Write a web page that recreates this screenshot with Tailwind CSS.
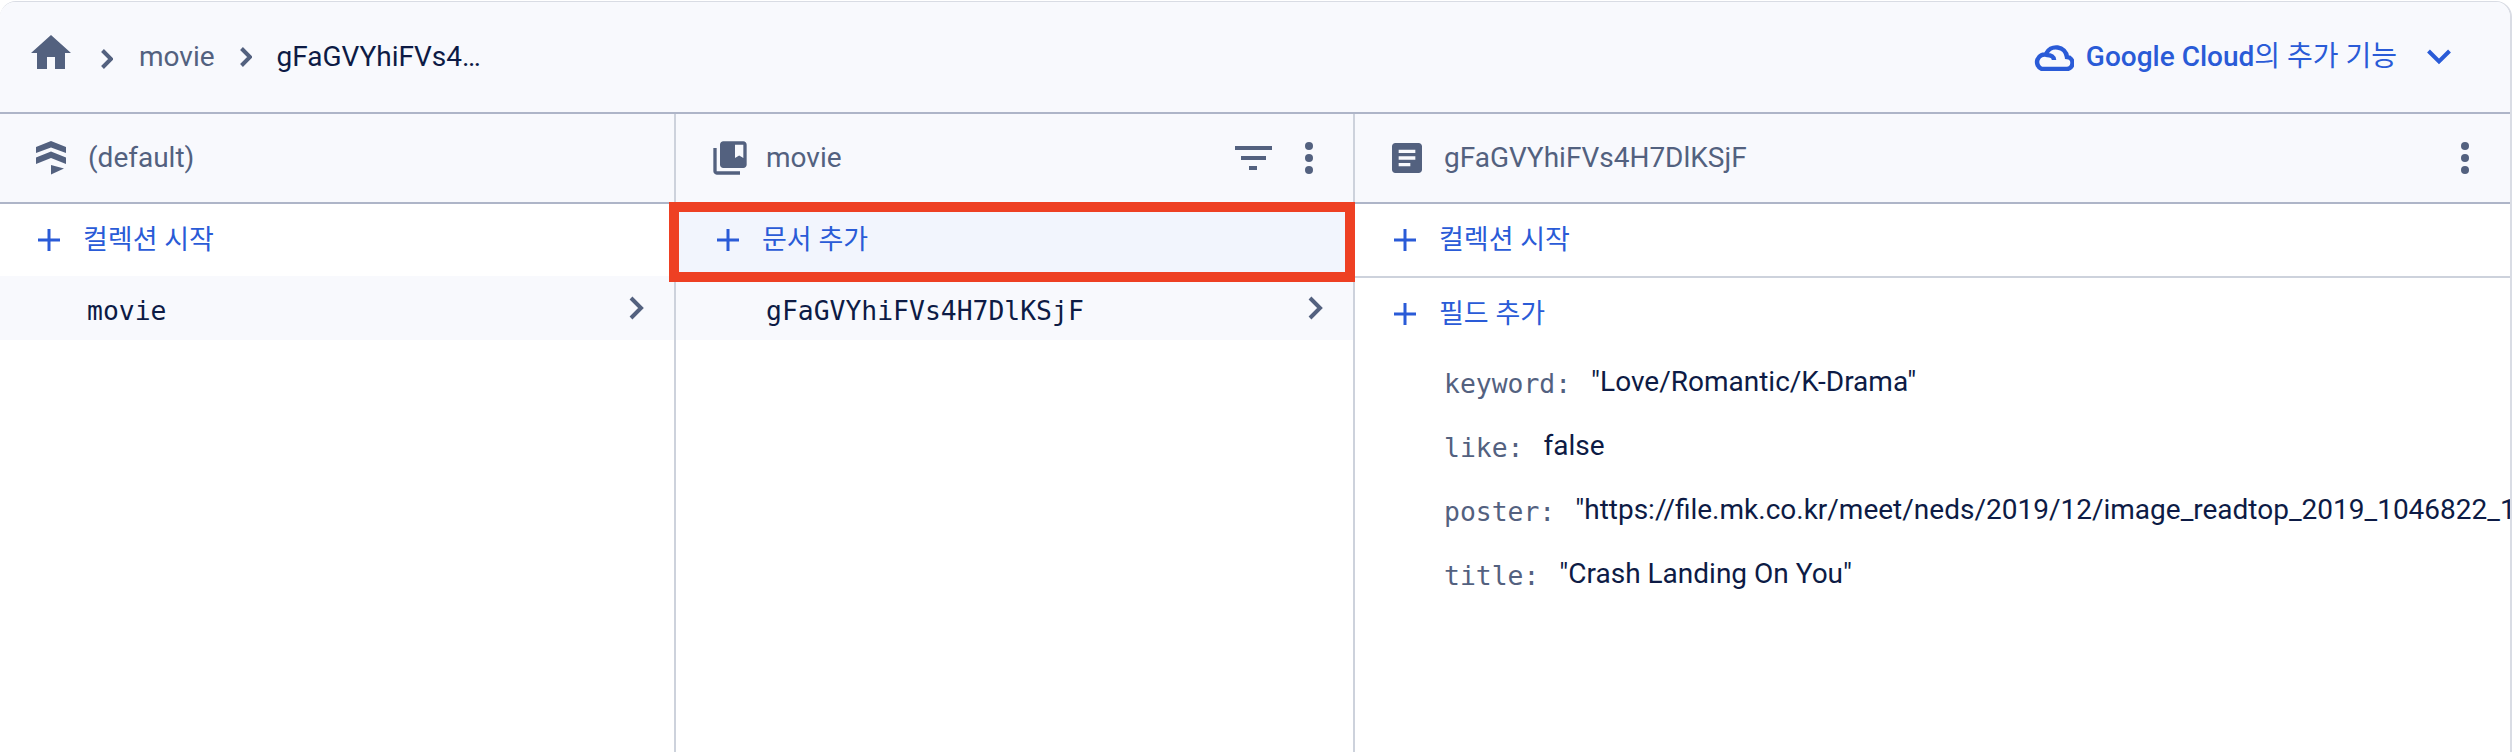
<!DOCTYPE html>
<html lang="ko">
  <head>
    <meta charset="UTF-8" />
    <title>Firestore</title>
    <script src="https://cdn.jsdelivr.net/npm/@tailwindcss/browser@4"></script>
  </head>
  <body class="bg-white font-['Roboto','Noto_Sans_CJK_KR',sans-serif]">
    <div class="relative w-[2520px] h-[752px] overflow-hidden bg-white">
      <div class="w-[2512px] h-[752px] mt-[1px] flex flex-col rounded-t-[16px] border-t border-r-2 border-[#d9dce4] overflow-hidden">
        <!-- Breadcrumb header -->
        <div class="h-[112px] shrink-0 flex items-center bg-[#f8f9fd] border-b-2 border-[#aeb5c8]">
          <svg class="ml-[27px] mb-[8px] w-[48px] h-[48px] fill-[#53617f]" viewBox="0 0 24 24"><path d="M10 20v-6h4v6h5v-8h3L12 3 2 12h3v8z" /></svg>
          <svg class="ml-[26px] mt-[4px] w-[12px] h-[20px] fill-none stroke-[#53617f] stroke-[4]" viewBox="0 0 12 20"><path d="M1.500 1.500 10 10l-8.500 8.500" /></svg>
          <span class="ml-[26px] text-[28px] text-[#53617f]">movie</span>
          <svg class="ml-[25px] w-[12px] h-[20px] fill-none stroke-[#53617f] stroke-[4]" viewBox="0 0 12 20"><path d="M1.500 1.500 10 10l-8.500 8.500" /></svg>
          <span class="ml-[25px] text-[28px] text-[#0d1b45]">gFaGVYhiFVs4…</span>
          <div class="ml-auto flex items-center pr-[59px]">
            <svg class="w-[41px] h-[28px] fill-none stroke-[#2a5bd7] stroke-[4.500]" viewBox="0 0 41 28"><path d="M21 17c0-3-3-5-7-5a7 7 0 0 0-5 14h24a6 6 0 0 0 1-12A11 11 0 0 0 13 11" /></svg>
            <span class="ml-[12px] text-[28px] font-medium text-[#2a5bd7]">Google Cloud<span class="font-normal">의 추가 기능</span></span>
            <svg class="ml-[30px] w-[24px] h-[16px] fill-none stroke-[#2a5bd7] stroke-[4]" viewBox="0 0 24 16"><path d="M1.500 2 12 12.500 22.500 2" /></svg>
          </div>
        </div>

        <div class="flex-1 flex min-h-0">
          <!-- Database column -->
          <div class="w-[676px] shrink-0 border-r-2 border-[#cdd2dc]">
            <div class="h-[90px] flex items-center bg-[#f8f9fd] border-b-2 border-[#aeb5c8] pl-[36px]">
              <svg class="w-[30px] h-[34px] fill-[#53617f]" viewBox="0 0 30 34"><path d="M15 0 30 6v6L15 6.500 0 12V6z" /><path d="M15 10.500l15 6v6.500L15 17 0 23v-6.500z" /><path d="M15 24l13 3.500L15 33.500z" /></svg>
              <span class="ml-[22px] text-[28px] text-[#53617f]">(default)</span>
            </div>
            <div class="h-[72px] flex items-center pl-[38px] text-[#2a5bd7]">
              <svg class="w-[22px] h-[22px] fill-[#2a5bd7]" viewBox="0 0 22 22"><path d="M9.500 0h3v9.500H22v3h-9.500V22h-3v-9.500H0v-3h9.500z" /></svg>
              <span class="ml-[23px] text-[27px]">컬렉션 시작</span>
            </div>
            <div class="h-[64px] flex items-center bg-[#f8f9fd] pl-[87px] pr-[30px]">
              <span class="pt-[6px] font-['DejaVu_Sans_Mono',monospace] text-[26.400px] text-[#0d1b45]">movie</span>
              <svg class="ml-auto w-[15px] h-[24px] fill-none stroke-[#53617f] stroke-[4]" viewBox="0 0 15 24"><path d="M2 2l10 10L2 22" /></svg>
            </div>
          </div>

          <!-- Collection column -->
          <div class="w-[679px] shrink-0 border-r-2 border-[#cdd2dc]">
            <div class="h-[90px] flex items-center bg-[#f8f9fd] border-b-2 border-[#aeb5c8] pl-[34px]">
              <svg class="w-[40px] h-[40px] fill-[#53617f]" viewBox="0 0 24 24"><path d="M4 6H2v14c0 1.100.9 2 2 2h14v-2H4V6zm16-4H8c-1.100 0-2 .9-2 2v12c0 1.100.9 2 2 2h12c1.100 0 2-.9 2-2V4c0-1.100-.9-2-2-2zm0 10l-2.500-1.500L15 12V4h5v8z" /></svg>
              <span class="ml-[16px] text-[28px] text-[#53617f]">movie</span>
              <svg class="ml-auto w-[37px] h-[24px] fill-[#53617f]" viewBox="0 0 37 24"><path d="M0 0h37v4H0zM6 10h25v4H6zM14 20h8v4h-8z" /></svg>
              <svg class="ml-[33px] mr-[40px] w-[8px] h-[32px] fill-[#53617f]" viewBox="0 0 8 32"><circle cx="4" cy="4" r="4" /><circle cx="4" cy="16" r="4" /><circle cx="4" cy="28" r="4" /></svg>
            </div>
            <div class="h-[72px] flex items-center pl-[41px] bg-[#f2f5fd]">
              <svg class="w-[22px] h-[22px] fill-[#2a5bd7]" viewBox="0 0 22 22"><path d="M9.500 0h3v9.500H22v3h-9.500V22h-3v-9.500H0v-3h9.500z" /></svg>
              <span class="ml-[23px] text-[27px] text-[#2a5bd7]">문서 추가</span>
            </div>
            <div class="h-[64px] flex items-center bg-[#f8f9fd] pl-[90px] pr-[30px]">
              <span class="pt-[6px] font-['DejaVu_Sans_Mono',monospace] text-[26.400px] text-[#0d1b45]">gFaGVYhiFVs4H7DlKSjF</span>
              <svg class="ml-auto w-[15px] h-[24px] fill-none stroke-[#53617f] stroke-[4]" viewBox="0 0 15 24"><path d="M2 2l10 10L2 22" /></svg>
            </div>
          </div>

          <!-- Document column -->
          <div class="flex-1 min-w-0">
            <div class="h-[90px] flex items-center bg-[#f8f9fd] border-b-2 border-[#aeb5c8] pl-[32px]">
              <svg class="w-[40px] h-[40px] fill-[#53617f]" viewBox="0 0 24 24"><path d="M19 3H5c-1.100 0-2 .9-2 2v14c0 1.100.9 2 2 2h14c1.100 0 2-.9 2-2V5c0-1.100-.9-2-2-2zm-5 14H7v-2h7v2zm3-4H7v-2h10v2zm0-4H7V7h10v2z" /></svg>
              <span class="ml-[17px] text-[28px] text-[#53617f]">gFaGVYhiFVs4H7DlKSjF</span>
              <svg class="ml-auto mr-[41px] w-[8px] h-[32px] fill-[#53617f]" viewBox="0 0 8 32"><circle cx="4" cy="4" r="4" /><circle cx="4" cy="16" r="4" /><circle cx="4" cy="28" r="4" /></svg>
            </div>
            <div class="h-[74px] flex items-center pl-[39px] border-b-2 border-[#cdd2dc]">
              <svg class="w-[22px] h-[22px] fill-[#2a5bd7]" viewBox="0 0 22 22"><path d="M9.500 0h3v9.500H22v3h-9.500V22h-3v-9.500H0v-3h9.500z" /></svg>
              <span class="ml-[23px] text-[27px] text-[#2a5bd7]">컬렉션 시작</span>
            </div>
            <div class="h-[72px] flex items-center pl-[39px]">
              <svg class="w-[22px] h-[22px] fill-[#2a5bd7]" viewBox="0 0 22 22"><path d="M9.500 0h3v9.500H22v3h-9.500V22h-3v-9.500H0v-3h9.500z" /></svg>
              <span class="ml-[23px] text-[27px] text-[#2a5bd7]">필드 추가</span>
            </div>
            <div class="pl-[89px] whitespace-nowrap overflow-hidden text-[28px] text-[#0d1b45]">
              <div class="h-[64px] flex items-center"><span class="pt-[3px] font-['DejaVu_Sans_Mono',monospace] text-[26.400px] text-[#53617f] mr-[20px]">keyword:</span>"Love/Romantic/K-Drama"</div>
              <div class="h-[64px] flex items-center"><span class="pt-[3px] font-['DejaVu_Sans_Mono',monospace] text-[26.400px] text-[#53617f] mr-[20px]">like:</span>false</div>
              <div class="h-[64px] flex items-center"><span class="pt-[3px] font-['DejaVu_Sans_Mono',monospace] text-[26.400px] text-[#53617f] mr-[20px]">poster:</span>"https://file.mk.co.kr/meet/neds/2019/12/image_readtop_2019_1046822_15761234</div>
              <div class="h-[64px] flex items-center"><span class="pt-[3px] font-['DejaVu_Sans_Mono',monospace] text-[26.400px] text-[#53617f] mr-[20px]">title:</span>"Crash Landing On You"</div>
            </div>
          </div>
        </div>
      </div>

      <!-- Red annotation box -->
      <div class="absolute left-[669px] top-[202px] w-[686px] h-[80px] border-[10px] border-[#ee4023]"></div>
    </div>
  </body>
</html>
